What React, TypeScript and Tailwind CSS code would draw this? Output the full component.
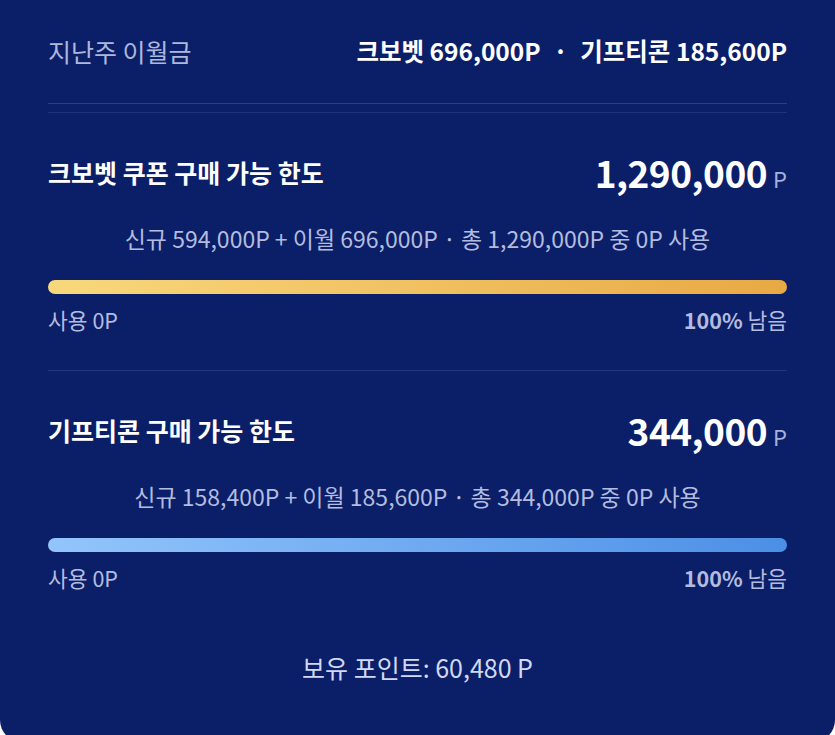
const font = { fontFamily: '"Noto Sans CJK KR", "Noto Sans", sans-serif' };

type Limit = {
  title: string;
  amount: string;
  detail: string;
  bar: string;
};

const limits: Limit[] = [
  {
    title: "크보벳 쿠폰 구매 가능 한도",
    amount: "1,290,000",
    detail: "신규 594,000P + 이월 696,000P · 총 1,290,000P 중 0P 사용",
    bar: "bg-gradient-to-r from-[#f8d87c] to-[#e8a944]",
  },
  {
    title: "기프티콘 구매 가능 한도",
    amount: "344,000",
    detail: "신규 158,400P + 이월 185,600P · 총 344,000P 중 0P 사용",
    bar: "bg-gradient-to-r from-[#93c5fb] to-[#4b8fe6]",
  },
];

function LimitBlock({ item }: { item: Limit }) {
  return (
    <div className="pt-[37px]">
      <div className="flex items-center justify-between h-[44px]">
        <span className="text-[25px] leading-[44px] font-bold text-white">{item.title}</span>
        <span className="flex items-baseline">
          <span className="text-[37px] font-bold text-white leading-none tracking-[-0.5px]">
            {item.amount}
          </span>
          <span className="ml-[6px] text-[22px] text-[#a7b1d8] leading-none">P</span>
        </span>
      </div>
      <p className="mt-[29px] text-center text-[23px] leading-[30px] text-[#b3bcdf]">
        {item.detail}
      </p>
      <div className={`mt-[27px] h-[14px] rounded-full ${item.bar}`} />
      <div className="mt-[12px] flex justify-between text-[21.5px] leading-[28px] text-[#b3bcdf]">
        <span>사용 0P</span>
        <span>
          <b className="font-bold">100%</b> 남음
        </span>
      </div>
    </div>
  );
}

export default function App() {
  return (
    <div className="h-[735px] w-full overflow-hidden bg-white" style={font}>
      <div className="h-[742px] rounded-b-[22px] bg-[#0b1f69] px-[48px]">
        <div className="flex items-center justify-between h-[104px] border-b border-[#2b3f88]">
          <span className="text-[25px] text-[#aeb7dc]">지난주 이월금</span>
          <span className="text-[24.5px] font-bold text-white">
            크보벳 696,000P <span className="mx-[7px]">·</span> 기프티콘 185,600P
          </span>
        </div>
        <div className="mt-[8px] border-t border-[#1e3179] pb-[36px]">
          <LimitBlock item={limits[0]} />
        </div>
        <div className="border-t border-[#22357d]">
          <LimitBlock item={limits[1]} />
        </div>
        <p className="mt-[60px] text-center text-[25px] leading-[30px] text-[#d2d8f1]">보유 포인트: 60,480 P</p>
      </div>
    </div>
  );
}
